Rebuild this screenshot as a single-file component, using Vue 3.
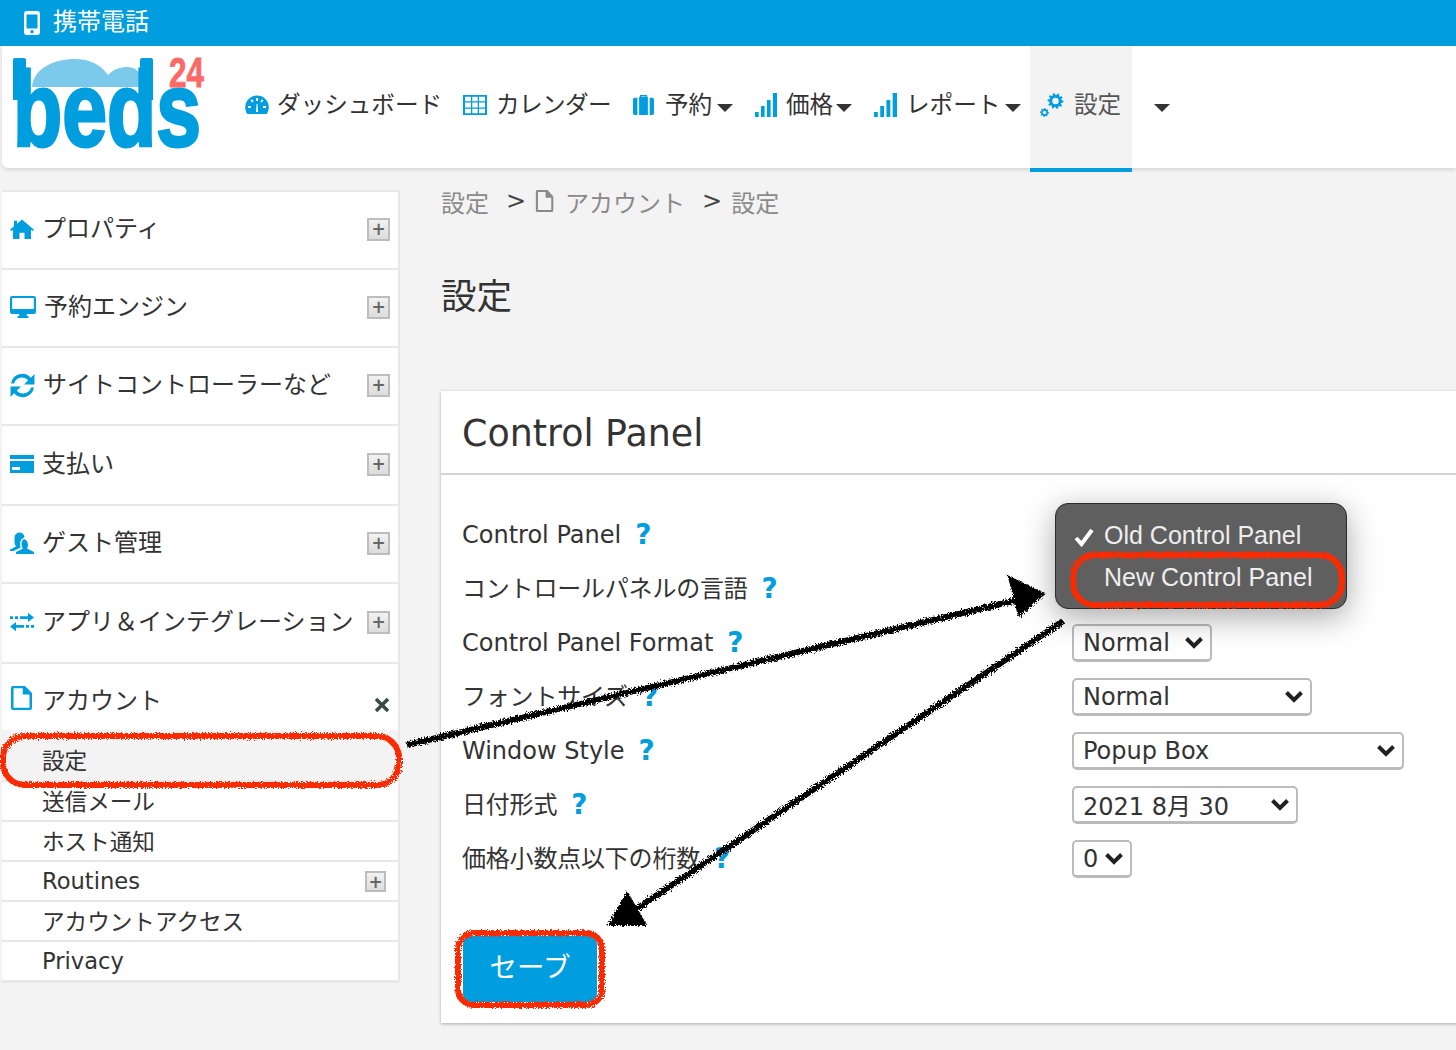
<script setup>
function gear(cx, cy, r, teeth) {
  const pts = []
  const n = teeth * 4
  for (let i = 0; i < n; i++) {
    const a = (i / n) * Math.PI * 2
    const rr = i % 4 < 2 ? r : r * 0.76
    pts.push((cx + rr * Math.cos(a)).toFixed(2) + ' ' + (cy + rr * Math.sin(a)).toFixed(2))
  }
  const hole = (rad) => `M${cx - rad} ${cy}a${rad} ${rad} 0 1 0 ${rad * 2} 0a${rad} ${rad} 0 1 0 ${-rad * 2} 0z`
  return 'M' + pts.join('L') + 'z' + hole(r * 0.4)
}

const bars = 'M0 19h4v5H0zM6.5 13h4v11h-4zM13 7h4v17h-4zM19.500 0h4.500v24h-4.500z'
const icons = {
  gauge: 'M12 2.500A11.800 11.800 0 0 0 .2 14.300c0 2.500.8 4.900 2.100 6.700h19.400c1.300-1.800 2.100-4.200 2.100-6.700A11.800 11.800 0 0 0 12 2.500zM11 5h2v3h-2zM5.500 7.500l1.500-1.300 1.700 2-1.500 1.300zM3 13h3v2H3zM18 13h3v2h-3zM15.300 8.200l1.700-2 1.500 1.300-1.700 2zM11 19l.6-8h.9l.6 8z',
  table: 'M0 1h24v22H0zM2 3v5h6V3zM9.300 3v5h5.400V3zM16 3v5h6V3zM2 9.300v5.400h6V9.300zM9.300 9.300v5.400h5.400V9.300zM16 9.300v5.400h6V9.300zM2 16v5h6v-5zM9.300 16v5h5.400v-5zM16 16v5h6v-5z',
  case: 'M8 3V1h8v2h-1.500V2.500h-5V3zM0 6a2 2 0 0 1 2-2h3v19H2a2 2 0 0 1-2-2zM7 3h10v20H7zM19 4h3a2 2 0 0 1 2 2v15a2 2 0 0 1-2 2h-3z',
  bars,
  gears: gear(15.500, 8, 8, 10) + gear(4.500, 19.500, 4.500, 8),
  home: 'M12 1.500 24 12.800l-1.300 1.400-1.700-1.500V23h-6.500v-7h-5v7H3V12.700l-1.700 1.500L0 12.800l4-3.800V3h3v3.200z',
  desktop: 'M2 1h20a2 2 0 0 1 2 2v14a2 2 0 0 1-2 2h-6.500v2H17v2H7v-2h1.500v-2H2a2 2 0 0 1-2-2V3a2 2 0 0 1 2-2zM2 3v11h20V3z',
  refresh: 'M1 10A11 11 0 0 1 20 4.500L23.500 1V11H13.500L17.500 7A8 8 0 0 0 3.800 10zM23 14A11 11 0 0 1 4 19.500L.5 23V13H10.500L6.500 17A8 8 0 0 0 20.200 14z',
  card: 'M0 3h24v4H0zM0 9h24v12H0zM2 15v3h8v-3z',
  users: 'M14 8a6 6.500 0 0 1 4 6c0 1-.5 2.500-1 3.500L24 21v2H6v-2l7-3.500c-.7-1-1.500-2.500-1.500-4A6 6 0 0 1 14 8zM9.500 1.500a5 5 0 0 1 5 4.700A7.500 7.500 0 0 0 10 13.500c0 1 .3 2 .8 3L3.500 20H0v-1.500l6-3c-.8-1-1.500-3-1.500-5v-4a5 5 0 0 1 5-5z',
  transfer: 'M0 5h3v3.500H0zM5 5h3v3.500H5zM10 5h8V1l6 5.500L18 12V8.500h-8zM24 15.500h-3V19h3zM19 15.500h-3V19h3zM14 15.500H6V12L0 17.500 6 23V19h8z',
  file: 'M3 0h12l7 7v15a2 2 0 0 1-2 2H3a2 2 0 0 1-2-2V2a2 2 0 0 1 2-2zM3.500 2.200v19.600h16V8.500h-6.800V2.200z'
}

const navItems = [
  { icon: 'gauge', text: 'ダッシュボード', w: 24, h: 24, cls: 'n1' },
  { icon: 'table', text: 'カレンダー', w: 24, h: 22, cls: 'n2' },
  { icon: 'case', text: '予約', w: 21, h: 22, caret: true, cls: 'n3' },
  { icon: 'bars', text: '価格', w: 22, h: 24, caret: true, cls: 'n4' },
  { icon: 'bars', text: 'レポート', w: 23, h: 24, caret: true, cls: 'n5' }
]

const sideItems = [
  { icon: 'home', text: 'プロパティ', w: 24, h: 22, h2: 78 },
  { icon: 'desktop', text: '予約エンジン', w: 26, h: 24, h2: 78 },
  { icon: 'refresh', text: 'サイトコントローラーなど', w: 25, h: 25, h2: 78 },
  { icon: 'card', text: '支払い', w: 24, h: 24, h2: 80 },
  { icon: 'users', text: 'ゲスト管理', w: 24, h: 24, h2: 78 },
  { icon: 'transfer', text: 'アプリ＆インテグレーション', w: 24, h: 20, h2: 80 }
]

const subItems = [
  { text: '設定', active: true },
  { text: '送信メール' },
  { text: 'ホスト通知' },
  { text: 'Routines', plus: true },
  { text: 'アカウントアクセス' },
  { text: 'Privacy' }
]

const rows = [
  { label: 'Control Panel' },
  { label: 'コントロールパネルの言語', ja: true },
  { label: 'Control Panel Format', value: 'Normal', width: 140 },
  { label: 'フォントサイズ', ja: true, value: 'Normal', width: 240 },
  { label: 'Window Style', value: 'Popup Box', width: 332 },
  { label: '日付形式', ja: true, value: '2021 8月 30', width: 226 },
  { label: '価格小数点以下の桁数', ja: true, value: '0', width: 60 }
]
</script>

<template>
  <div class="page">
    <header class="topbar">
      <svg class="phone" viewBox="0 0 16 24" width="16" height="24"><path fill-rule="evenodd" d="M3 0h10a3 3 0 0 1 3 3v18a3 3 0 0 1-3 3H3a3 3 0 0 1-3-3V3a3 3 0 0 1 3-3zM2.500 3.500v14h11v-14zM8 19a1.700 1.700 0 1 0 0 3.400A1.700 1.700 0 0 0 8 19z"/></svg>
      <span>携帯電話</span>
    </header>

    <nav class="navbar">
      <svg class="logo" viewBox="0 0 200 100" width="200" height="100">
        <path class="cloud" d="M20 33C22 14 42 5 63 5c15 0 26 6 33 16 6-6 12-8 20-8 9 0 16 9 17 20z"/>
        <text class="beds" x="1" y="92" textLength="188" lengthAdjust="spacingAndGlyphs">beds</text>
        <path class="logo-stem" d="M1 6a2 2 0 0 1 2-2h9a2 2 0 0 1 2 2v40H1zM128 6a2 2 0 0 1 2-2h9a2 2 0 0 1 2 2v40h-13z"/>
        <text class="n24" x="157" y="33" textLength="35" lengthAdjust="spacingAndGlyphs">24</text>
      </svg>
      <ul class="menu">
        <li v-for="item in navItems" :key="item.text" class="menu-item" :class="item.cls">
          <svg class="blue" viewBox="0 0 24 24" :width="item.w" :height="item.h" preserveAspectRatio="none"><path fill-rule="evenodd" :d="icons[item.icon]"/></svg>
          <span class="ja-text">{{ item.text }}</span>
          <i v-if="item.caret" class="caret"></i>
        </li>
        <li class="menu-item active">
          <svg class="blue" viewBox="0 0 24 24" width="24" height="24"><path fill-rule="evenodd" :d="icons.gears"/></svg>
          <span class="ja-text">設定</span>
        </li>
        <li class="menu-item more"><i class="caret"></i></li>
      </ul>
    </nav>

    <div class="body">
      <aside class="sidebar">
        <div v-for="item in sideItems" :key="item.text" class="side-row" :style="{ height: item.h2 + 'px' }">
          <svg class="blue side-icon" viewBox="0 0 24 24" :width="item.w" :height="item.h" preserveAspectRatio="none"><path fill-rule="evenodd" :d="icons[item.icon]"/></svg>
          <span class="side-text">{{ item.text }}</span>
          <span class="plus">+</span>
        </div>
        <div class="side-account">
          <svg class="blue side-icon" viewBox="0 0 24 24" width="24" height="24"><path fill-rule="evenodd" :d="icons.file"/></svg>
          <span class="side-text">アカウント</span>
          <svg class="close" viewBox="0 0 16 16" width="16" height="16"><path d="M2 2l12 12M14 2 2 14"/></svg>
        </div>
        <div v-for="sub in subItems" :key="sub.text" class="sub-row" :class="{ current: sub.active }">
          <span>{{ sub.text }}</span>
          <span v-if="sub.plus" class="plus small">+</span>
        </div>
      </aside>

      <main class="main">
        <div class="crumbs">
          <span>設定</span>
          <b>&gt;</b>
          <svg viewBox="0 0 24 24" width="20" height="22" preserveAspectRatio="none"><path fill-rule="evenodd" :d="icons.file"/></svg>
          <span>アカウント</span>
          <b>&gt;</b>
          <span>設定</span>
        </div>
        <h1>設定</h1>
        <section class="card">
          <h2>Control Panel</h2>
          <div class="form">
            <div v-for="row in rows" :key="row.label" class="form-row">
              <div class="label" :class="{ ja: row.ja }">
                <span>{{ row.label }}</span>
                <b>?</b>
              </div>
              <div v-if="row.value" class="select" :style="{ width: row.width + 'px' }">
                <span>{{ row.value }}</span>
                <svg viewBox="0 0 18 12" width="18" height="12"><path d="M1.500 1.500l7.500 7.500 7.500-7.500"/></svg>
              </div>
            </div>
            <div class="popup">
              <div class="opt"><svg viewBox="0 0 20 20" width="20" height="20"><path d="M2 11l5.500 6L18 3"/></svg>Old Control Panel</div>
              <div class="opt">New Control Panel</div>
            </div>
          </div>
          <button class="save" type="button">セーブ</button>
        </section>
      </main>
    </div>

    <svg class="notes" viewBox="0 0 1456 1050" width="1456" height="1050">
      <defs>
        <filter id="rough" x="0" y="0" width="1456" height="1050" filterUnits="userSpaceOnUse">
          <feTurbulence type="fractalNoise" baseFrequency="0.7" numOctaves="2" seed="4"/>
          <feDisplacementMap in="SourceGraphic" scale="6"/>
        </filter>
      </defs>
      <g filter="url(#rough)">
        <g class="red">
          <rect x="3" y="736" width="396" height="49" rx="22"/>
          <rect x="1073" y="555" width="269" height="50" rx="22"/>
          <rect x="458" y="933" width="144" height="72" rx="16"/>
        </g>
        <g class="ink">
          <path d="M407 745 1030 597"/>
          <path d="M1063 621 632 912"/>
          <path class="head" d="M1009 577 1044 594 1019 616z"/>
          <path class="head" d="M627 893 646 925 609 925z"/>
        </g>
      </g>
    </svg>
  </div>
</template>

<style scoped>
.page {
  position: relative;
  width: 1456px;
  height: 1050px;
  overflow: hidden;
  background: #f3f3f3;
  font-family: "DejaVu Sans", "Noto Sans CJK JP", sans-serif;
  font-size: 24px;
  color: #333;
}
.topbar {
  height: 46px;
  background: #009ede;
  color: #fff;
  display: flex;
  align-items: center;
  gap: 13px;
  padding-left: 24px;
  box-sizing: border-box;
}
.topbar span { margin-bottom: 8px; }
.phone { fill: #fff; }
.navbar {
  height: 122px;
  margin-left: 2px;
  background: #fff;
  border-bottom-left-radius: 6px;
  box-shadow: 0 2px 4px rgba(0, 0, 0, .12);
  display: flex;
  position: relative;
}
.logo { margin: 8px 0 0 10px; flex: none; overflow: visible; }
.cloud { fill: #7ccaeb; }
.logo-stem { fill: #009ede; }
.beds {
  font-family: "Liberation Sans", sans-serif;
  font-weight: 700;
  font-size: 106px;
  fill: #009ede;
  stroke: #009ede;
  stroke-width: 3px;
}
.n24 {
  font-family: "Liberation Sans", sans-serif;
  font-weight: 700;
  font-size: 42px;
  fill: #fb6a66;
  stroke: #fb6a66;
  stroke-width: .8px;
}
.menu {
  list-style: none;
  margin: 0 0 0 33px;
  padding: 0;
  display: flex;
  height: 126px;
}
.menu-item {
  display: flex;
  align-items: center;
  height: 118px;
  white-space: nowrap;
  font-size: 23.600px;
}
.ja-text { margin-bottom: 4px; }
.n1 { width: 218px; gap: 8px; }
.n2 { width: 170px; gap: 9px; letter-spacing: -.6px; }
.n3 { width: 122px; gap: 11px; }
.n4 { width: 119px; gap: 9px; }
.n5 { width: 156px; gap: 9px; }
.caret {
  display: inline-block;
  width: 0;
  height: 0;
  border-left: 8px solid transparent;
  border-right: 8px solid transparent;
  border-top: 8px solid #333;
  margin-top: 5px;
}
.n3 .caret { margin-left: -6px; }
.n4 .caret { margin-left: -6px; }
.n5 .caret { margin-left: -4px; }
.active {
  width: 102px;
  padding: 0 0 4px 10px;
  box-sizing: border-box;
  background: #f3f3f3;
  border-bottom: 4px solid #009ede;
  height: 126px;
  gap: 10px;
  color: #555;
}
.more { margin-left: 22px; }
.blue { fill: #009ede; flex: none; }
.body { display: flex; align-items: flex-start; }
.sidebar {
  width: 396px;
  margin: 24px 0 0 2px;
  flex: none;
  background: #e8e8e8;
  border-right: 2px solid #e8e8e8;
  border-bottom: 3px solid #e8e8e8;
  box-shadow: 0 -2px 0 #e8e8e8;
}
.side-row {
  background: #fff;
  display: flex;
  align-items: center;
  box-sizing: border-box;
  padding: 0 8px 8px 8px;
  border-bottom: 2px solid #e8e8e8;
}
.side-icon { margin: 6px 8px 0 0; }
.side-text { flex: 1; white-space: nowrap; }
.plus {
  width: 23px;
  height: 23px;
  margin-top: 6px;
  box-sizing: border-box;
  border: 2px solid #bdbdbd;
  background: linear-gradient(#f2f2f2, #dcdcdc);
  color: #666;
  font-size: 17px;
  font-weight: 700;
  line-height: 18px;
  text-align: center;
  flex: none;
}
.side-account {
  height: 66px;
  background: #fff;
  display: flex;
  align-items: center;
  padding: 2px 8px 0 8px;
  box-sizing: border-box;
}
.side-account .side-icon { margin-top: 0; }
.close { fill: none; stroke: #3a4a40; stroke-width: 3.500px; margin-top: 14px; }
.sub-row {
  height: 40px;
  box-sizing: border-box;
  background: #fff;
  border-top: 2px solid #e8e8e8;
  padding: 0 12px 1px 40px;
  display: flex;
  align-items: center;
  justify-content: space-between;
  font-size: 22.600px;
}
.sub-row.current { height: 50px; padding-top: 10px; background: #f3f3f3; border-top: 0; }
.plus.small { width: 21px; height: 21px; margin-top: 1px; }
.main { flex: 1; margin-left: 41px; min-width: 0; }
.crumbs {
  display: flex;
  align-items: center;
  height: 30px;
  margin-top: 18px;
  color: #8a8a8a;
  fill: #8a8a8a;
  gap: 12px;
}
.crumbs b { font-weight: 400; color: #444; margin: 0 -3px 0 5px; }
.crumbs svg { margin-right: -2px; }
h1 {
  font-size: 35.500px;
  font-weight: 400;
  line-height: 46px;
  margin: 58px 0 0;
  color: #333;
}
.card {
  margin: 71px -40px 0 0;
  height: 632px;
  background: #fff;
  box-shadow: 0 1px 3px rgba(0, 0, 0, .3);
  box-sizing: border-box;
}
h2 {
  font-size: 36.400px;
  font-weight: 400;
  line-height: 86px;
  height: 84px;
  margin: 0;
  padding-left: 21px;
  box-sizing: border-box;
  border-bottom: 2px solid #d4d4d4;
}
.form {
  position: relative;
  padding: 33px 0 0 21px;
}
.form-row {
  height: 54px;
  display: flex;
  align-items: center;
  position: relative;
}
.label { width: 610px; flex: none; display: flex; align-items: center; gap: 14px; white-space: nowrap; }
.label.ja span { margin-bottom: 5px; letter-spacing: -.2px; }
.label b { color: #009ede; font-size: 28px; font-weight: 700; line-height: 30px; }
.select {
  height: 38px;
  box-sizing: border-box;
  background: #fff;
  border: 2px solid #bbb;
  border-bottom-width: 3px;
  border-radius: 5px;
  display: flex;
  align-items: center;
  justify-content: space-between;
  padding: 0 7px 0 9px;
  white-space: nowrap;
}
.select svg { fill: none; stroke: #222; stroke-width: 4px; flex: none; }
.popup {
  position: absolute;
  left: 614px;
  top: 28px;
  width: 292px;
  height: 106px;
  box-sizing: border-box;
  background: #5f5f5f;
  border: 1px solid #2c2c2c;
  border-radius: 13px;
  box-shadow: 0 8px 32px rgba(0, 0, 0, .35);
  padding: 10px 0 0 48px;
  color: #eee;
  font-family: "Liberation Sans", sans-serif;
  font-size: 25px;
}
.opt { height: 42px; line-height: 42px; position: relative; white-space: nowrap; }
.opt svg { position: absolute; left: -30px; top: 13px; fill: none; stroke: #fff; stroke-width: 4px; }
.save {
  display: block;
  margin: 50px 0 0 22px;
  width: 134px;
  height: 66px;
  padding: 0 0 8px;
  border: 0;
  border-radius: 8px;
  background: #009ede;
  color: #fff;
  font: inherit;
  font-size: 27.500px;
}
.notes { position: absolute; left: 0; top: 0; pointer-events: none; }
.red rect { fill: none; stroke: #fb2a05; stroke-width: 6px; }
.ink path { fill: none; stroke: #000; stroke-width: 6px; }
.ink .head { fill: #000; stroke-width: 2px; }
</style>
